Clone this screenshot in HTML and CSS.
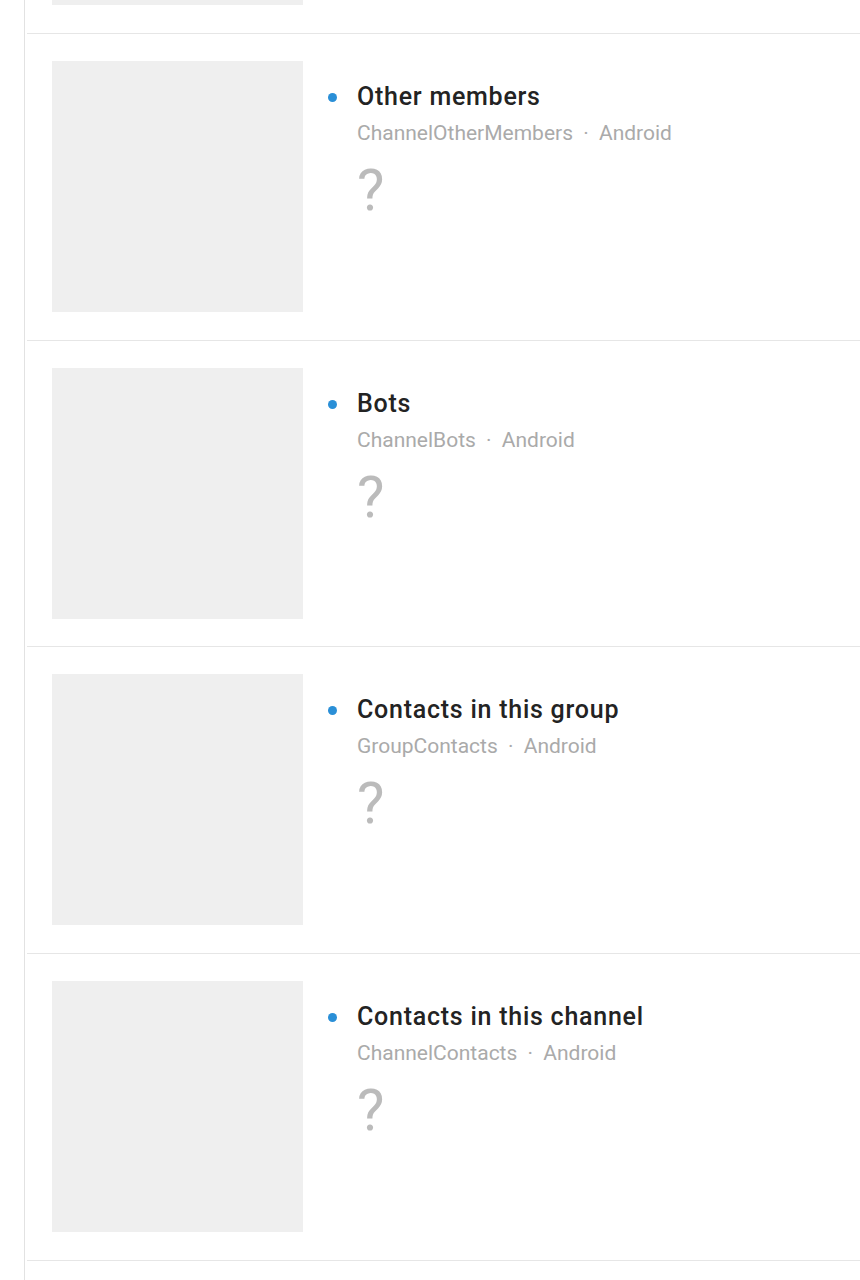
FILE: index.html
```html
<!DOCTYPE html>
<html>
<head>
<meta charset="utf-8">
<link rel="stylesheet" href="styles.css">
</head>
<body>
<div class="list">
  <div class="row first">
    <div class="thumb"></div>
    <div class="info"></div>
  </div>
  <div class="row">
    <div class="thumb"></div>
    <div class="info">
      <div class="title"><span class="dot"></span>Other members</div>
      <div class="sub">ChannelOtherMembers <span class="sep">·</span> Android</div>
      <div class="q">?</div>
    </div>
  </div>
  <div class="row">
    <div class="thumb"></div>
    <div class="info">
      <div class="title"><span class="dot"></span>Bots</div>
      <div class="sub">ChannelBots <span class="sep">·</span> Android</div>
      <div class="q">?</div>
    </div>
  </div>
  <div class="row">
    <div class="thumb"></div>
    <div class="info">
      <div class="title"><span class="dot"></span>Contacts in this group</div>
      <div class="sub">GroupContacts <span class="sep">·</span> Android</div>
      <div class="q">?</div>
    </div>
  </div>
  <div class="row">
    <div class="thumb"></div>
    <div class="info">
      <div class="title"><span class="dot"></span>Contacts in this channel</div>
      <div class="sub">ChannelContacts <span class="sep">·</span> Android</div>
      <div class="q">?</div>
    </div>
  </div>
  <div class="row">
    <div class="thumb"></div>
    <div class="info"></div>
  </div>
</div>
</body>
</html>
```

FILE: styles.css
```css
html, body {
  margin: 0;
  padding: 0;
  background: #ffffff;
  overflow: hidden;
  height: 1280px;
}

body {
  font-family: Roboto, "Liberation Sans", sans-serif;
}

.list {
  margin-left: 24px;
  border-left: 1px solid #e2e2e2;
  margin-top: -274px;
  min-height: 1600px;
}

.row {
  display: flex;
  margin-left: 2px;
  padding: 27px 0 27.75px 25px;
  border-top: 1px solid #e6e6e6;
}

.row.first {
  border-top: none;
  padding-top: 28px;
}

.thumb {
  width: 251px;
  height: 251px;
  background: #efefef;
  flex-shrink: 0;
}

.info {
  padding-left: 54px;
  padding-top: 22px;
}

.title {
  position: relative;
  font-size: 25px;
  line-height: 28px;
  font-weight: 500;
  letter-spacing: 0.75px;
  color: #232323;
}

.dot {
  position: absolute;
  left: -29px;
  top: 10px;
  width: 9px;
  height: 9px;
  border-radius: 50%;
  background: #2a8fd7;
}

.sub {
  margin-top: 10px;
  font-size: 21px;
  line-height: 24px;
  color: #aaaaaa;
}

.sep {
  margin: 0 5px;
}

.q {
  margin-top: 16px;
  font-size: 58px;
  line-height: 58px;
  font-weight: 400;
  color: #bbbbbb;
}
```
